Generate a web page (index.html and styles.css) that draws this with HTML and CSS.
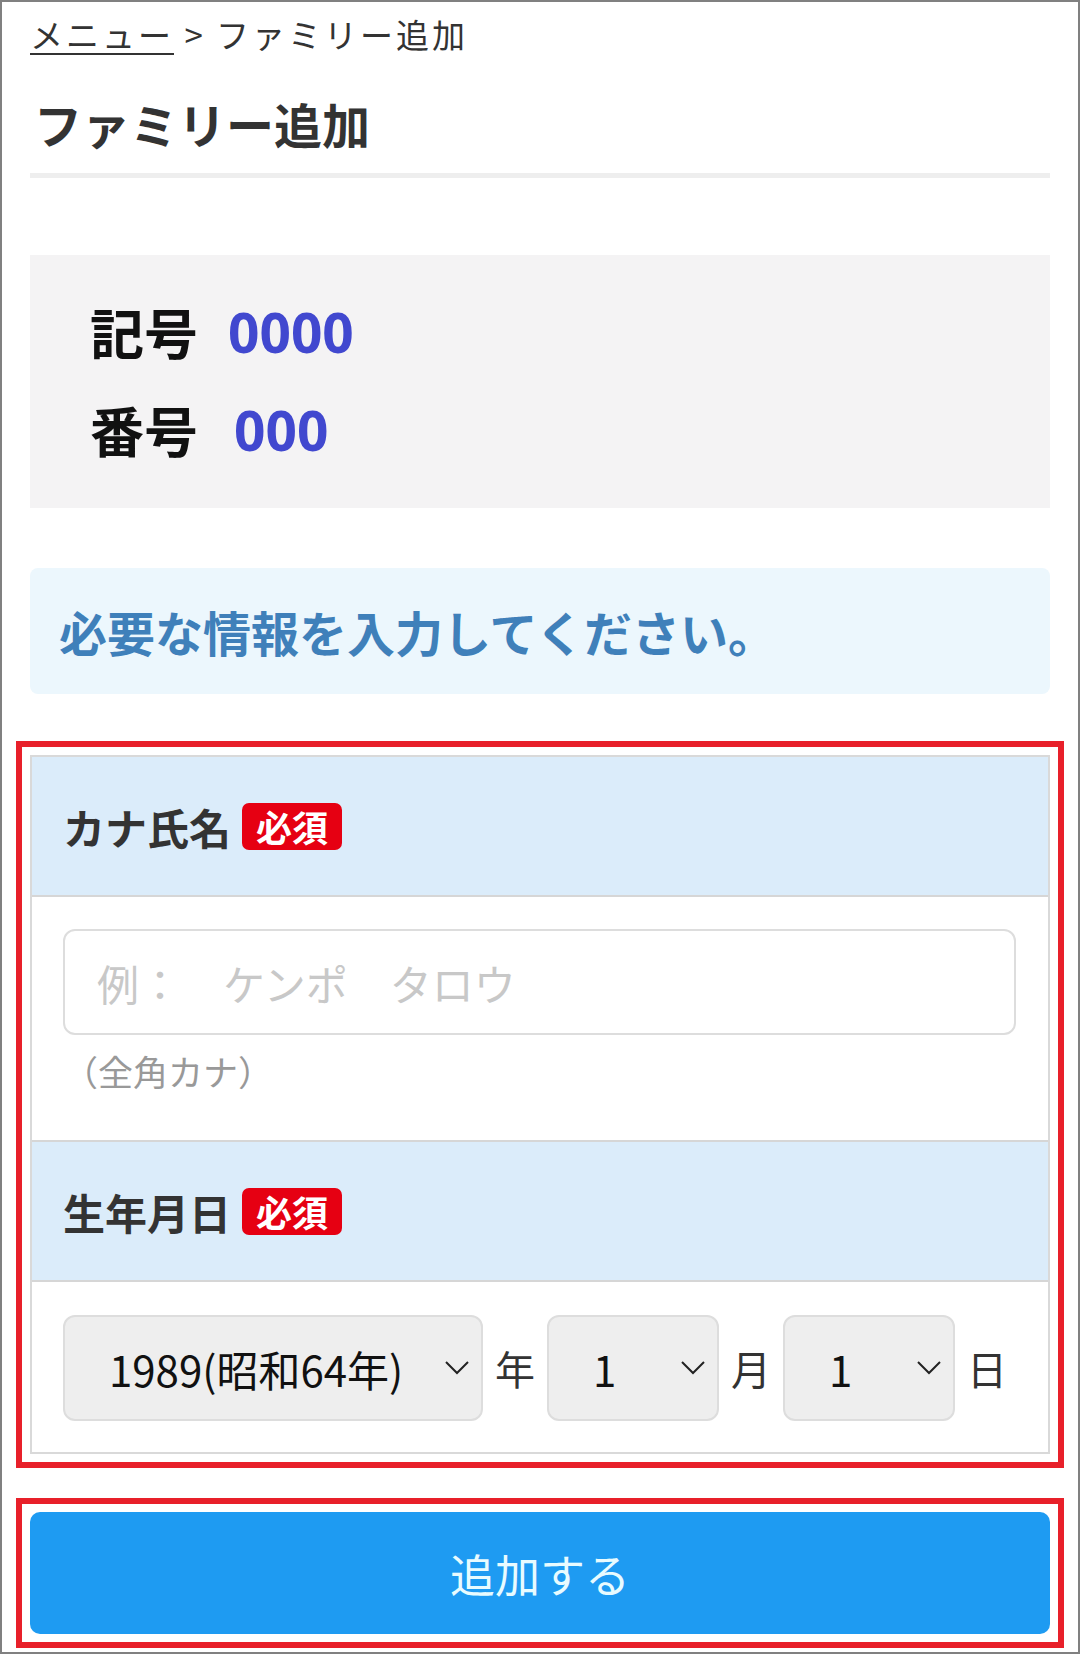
FILE: index.html
```html
<!DOCTYPE html>
<html lang="ja">
<head>
    <meta charset="UTF-8">
    <meta name="viewport" content="width=device-width, initial-scale=1.0">
    <title>ファミリー追加</title>
    <link rel="stylesheet" href="styles.css">
</head>
<body>
    <div class="frame">
        <nav class="crumb"><a href="#">メニュー</a> &gt; ファミリー追加</nav>
        <h1 class="title">ファミリー追加</h1>

        <div class="ids">
            <p class="id-row"><span class="id-label">記号</span><span class="id-value">0000</span></p>
            <p class="id-row"><span class="id-label">番号</span><span class="id-value id-value--short">000</span></p>
        </div>

        <div class="notice">必要な情報を入力してください。</div>

        <div class="form-table mark">
            <div class="form-head">
                <span>カナ氏名</span>
                <span class="req">必須</span>
            </div>
            <div class="form-body">
                <input class="text-input" type="text" placeholder="例：　ケンポ　タロウ">
                <p class="hint">（全角カナ）</p>
            </div>

            <div class="form-head">
                <span>生年月日</span>
                <span class="req">必須</span>
            </div>
            <div class="form-body date-row">
                <div class="select-wrap select-wrap--year">
                    <select class="select">
                        <option>1989(昭和64年)</option>
                    </select>
                    <svg class="chevron" viewBox="0 0 24 14" width="24" height="14"><path d="M1 1 L12 12 L23 1" fill="none" stroke="#222" stroke-width="2"/></svg>
                </div>
                <span class="unit">年</span>
                <div class="select-wrap">
                    <select class="select">
                        <option>1</option>
                    </select>
                    <svg class="chevron" viewBox="0 0 24 14" width="24" height="14"><path d="M1 1 L12 12 L23 1" fill="none" stroke="#222" stroke-width="2"/></svg>
                </div>
                <span class="unit">月</span>
                <div class="select-wrap">
                    <select class="select">
                        <option>1</option>
                    </select>
                    <svg class="chevron" viewBox="0 0 24 14" width="24" height="14"><path d="M1 1 L12 12 L23 1" fill="none" stroke="#222" stroke-width="2"/></svg>
                </div>
                <span class="unit">日</span>
            </div>
        </div>

        <div class="mark submit-mark">
            <button class="submit" type="button">追加する</button>
        </div>
    </div>
</body>
</html>
```

FILE: styles.css
```css
body {
    margin: 0;
    font-family: "Noto Sans CJK JP", "Noto Sans", sans-serif;
    color: #333333;
    background-color: #FFFFFF;
}

.frame {
    box-sizing: border-box;
    height: 1654px;
    border: 2px solid #808080;
    padding: 10px 28px 0 28px;
}

.crumb {
    font-size: 33px;
    line-height: 44px;
    letter-spacing: 3px;
    color: #333;
}

.crumb a {
    color: #333;
    text-decoration: underline;
    text-underline-offset: 5px;
    text-decoration-thickness: 2px;
}

.title {
    margin: 35px 0 0 0;
    font-size: 48px;
    line-height: 64px;
    font-weight: 700;
    color: #333;
    padding: 0 0 18px 4px;
    border-bottom: 5px solid #EEEEEE;
}

.ids {
    margin-top: 77px;
    padding: 27px 0 30px 60px;
    background-color: #F4F3F4;
}

.id-row {
    margin: 0;
    display: flex;
    align-items: center;
    height: 98px;
}

.id-label {
    font-size: 54px;
    font-weight: 700;
    color: #111;
    width: 108px;
}

.id-value {
    margin-left: 30px;
    font-family: "Open Sans", "Noto Sans", sans-serif;
    font-size: 55px;
    font-weight: 700;
    color: #4148CF;
}

.id-value--short {
    margin-left: 36px;
}

.notice {
    margin-top: 60px;
    height: 126px;
    display: flex;
    align-items: center;
    padding-left: 29px;
    background-color: #ECF7FD;
    border-radius: 8px;
    font-size: 48px;
    font-weight: 700;
    color: #3F80BA;
}

.mark {
    outline: 6px solid #E8202A;
    outline-offset: 8px;
}

.form-table {
    margin-top: 61px;
    border: 2px solid #D9D9D9;
}

.form-head {
    height: 138px;
    display: flex;
    align-items: center;
    gap: 11px;
    padding-left: 31px;
    background-color: #DBECFA;
    border-bottom: 2px solid #D6D6D6;
    font-size: 42px;
    font-weight: 700;
    color: #333;
}

.req {
    display: inline-flex;
    align-items: center;
    height: 47px;
    padding: 0 14px;
    border-radius: 7px;
    background-color: #E60012;
    color: #FFFFFF;
    font-size: 36px;
    font-weight: 700;
}

.form-body {
    padding: 32px 32px 45px 31px;
    border-bottom: 2px solid #D6D6D6;
}

.form-body:last-child {
    border-bottom: none;
}

.text-input {
    box-sizing: border-box;
    display: block;
    width: 100%;
    height: 106px;
    padding: 0 32px;
    border: 2px solid #DDDDDD;
    border-radius: 12px;
    font-family: inherit;
    font-size: 42px;
    color: #333;
    outline: none;
}

.text-input::placeholder {
    color: #C8C8C8;
}

.hint {
    margin: 12px 0 0 0;
    font-size: 35px;
    line-height: 48px;
    color: #999999;
}

.date-row {
    display: flex;
    align-items: center;
    gap: 12px;
    padding-top: 33px;
    padding-bottom: 31px;
}

.select-wrap {
    position: relative;
    width: 172px;
}

.select-wrap--year {
    width: 420px;
}

.select {
    box-sizing: border-box;
    width: 100%;
    height: 106px;
    padding: 0 0 0 44px;
    appearance: none;
    -webkit-appearance: none;
    background-color: #EEEEEE;
    border: 2px solid #DDDDDD;
    border-radius: 12px;
    font-family: inherit;
    font-size: 42px;
    color: #111;
}

.chevron {
    position: absolute;
    right: 14px;
    top: 46px;
}

.unit {
    font-size: 40px;
    color: #333;
}

.submit-mark {
    margin-top: 58px;
}

.submit {
    display: block;
    width: 100%;
    height: 122px;
    border: none;
    border-radius: 10px;
    background-color: #1E9BF2;
    color: #E8FBFF;
    font-family: inherit;
    font-size: 45px;
    cursor: pointer;
}
```
